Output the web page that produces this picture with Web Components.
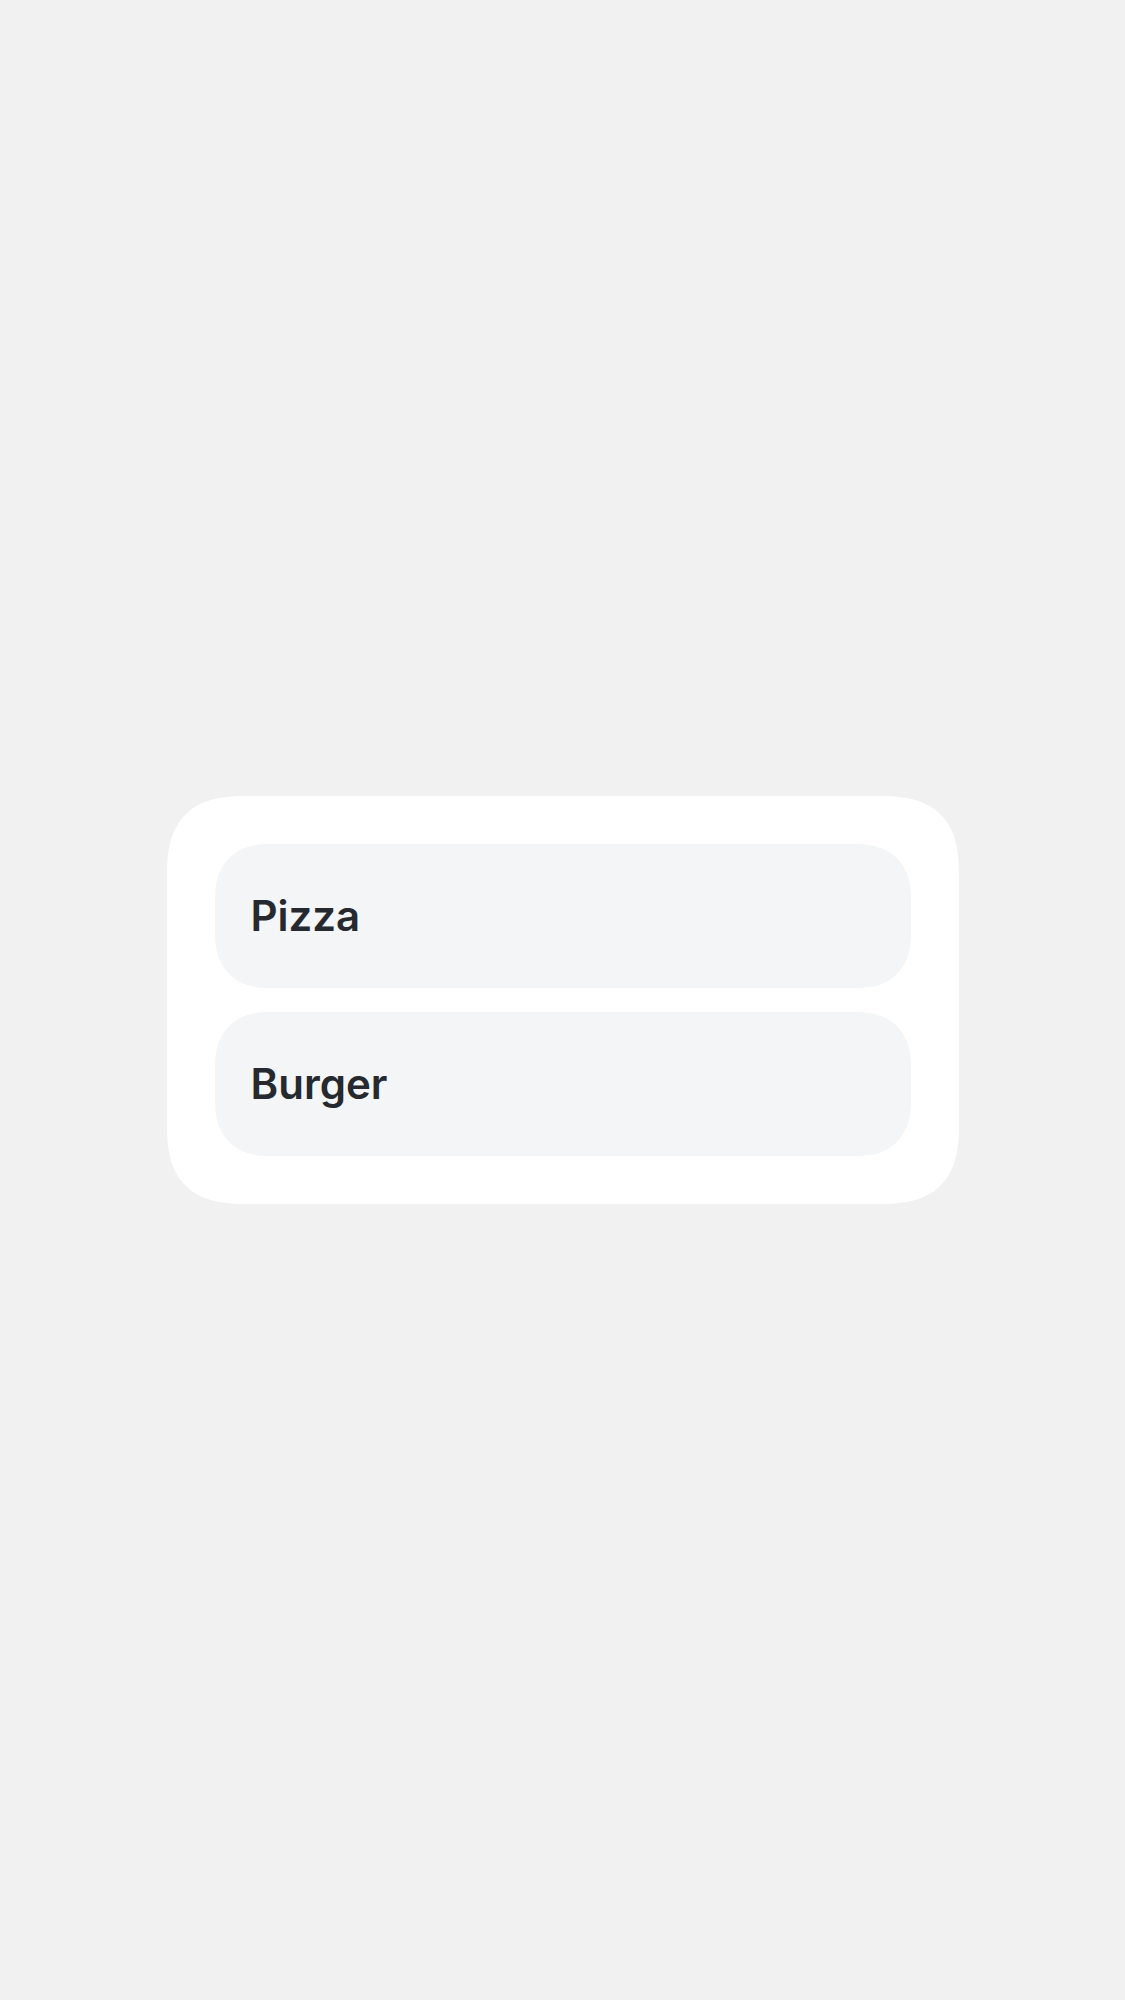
<!DOCTYPE html>
<html lang="en">
<head>
<meta charset="utf-8">
<meta name="viewport" content="width=device-width, initial-scale=1">
<title>Food options</title>
<style>
  body {
    margin: 0;
    background: #f1f1f1;
    color: #26292e;
    font-family: Inter, "Liberation Sans", sans-serif;
  }
</style>
</head>
<body>
<option-screen>
  <option-card>
    <option-item>Pizza</option-item>
    <option-item>Burger</option-item>
  </option-card>
</option-screen>

<template id="screen-template">
  <style>
    :host { display: block; }
    main {
      box-sizing: border-box;
      min-height: 100vh;
      padding: 48px;
      display: flex;
      align-items: center;
      justify-content: center;
    }
  </style>
  <main><slot></slot></main>
</template>

<template id="card-template">
  <style>
    :host {
      box-sizing: border-box;
      display: flex;
      flex-direction: column;
      gap: 24px;
      width: 100%;
      max-width: 792px;
      padding: 48px;
      background: #fff;
      border-radius: 80px;
      corner-shape: superellipse(1.4);
    }
  </style>
  <slot></slot>
</template>

<template id="item-template">
  <style>
    :host { display: block; }
    button {
      box-sizing: border-box;
      display: block;
      width: 100%;
      margin: 0;
      padding: 48px 36px;
      border: 0;
      border-radius: 54px;
      corner-shape: superellipse(1.2);
      background: #f3f5f7;
      color: inherit;
      font: 600 42px/48px Inter, "Liberation Sans", sans-serif;
      text-align: left;
      cursor: pointer;
    }
  </style>
  <button type="button"><slot></slot></button>
</template>

<script>
  const define = (name, templateId) => {
    customElements.define(name, class extends HTMLElement {
      constructor() {
        super();
        const template = document.getElementById(templateId);
        this.attachShadow({ mode: "open" }).append(template.content.cloneNode(true));
      }
    });
  };
  define("option-screen", "screen-template");
  define("option-card", "card-template");
  define("option-item", "item-template");
</script>
</body>
</html>
